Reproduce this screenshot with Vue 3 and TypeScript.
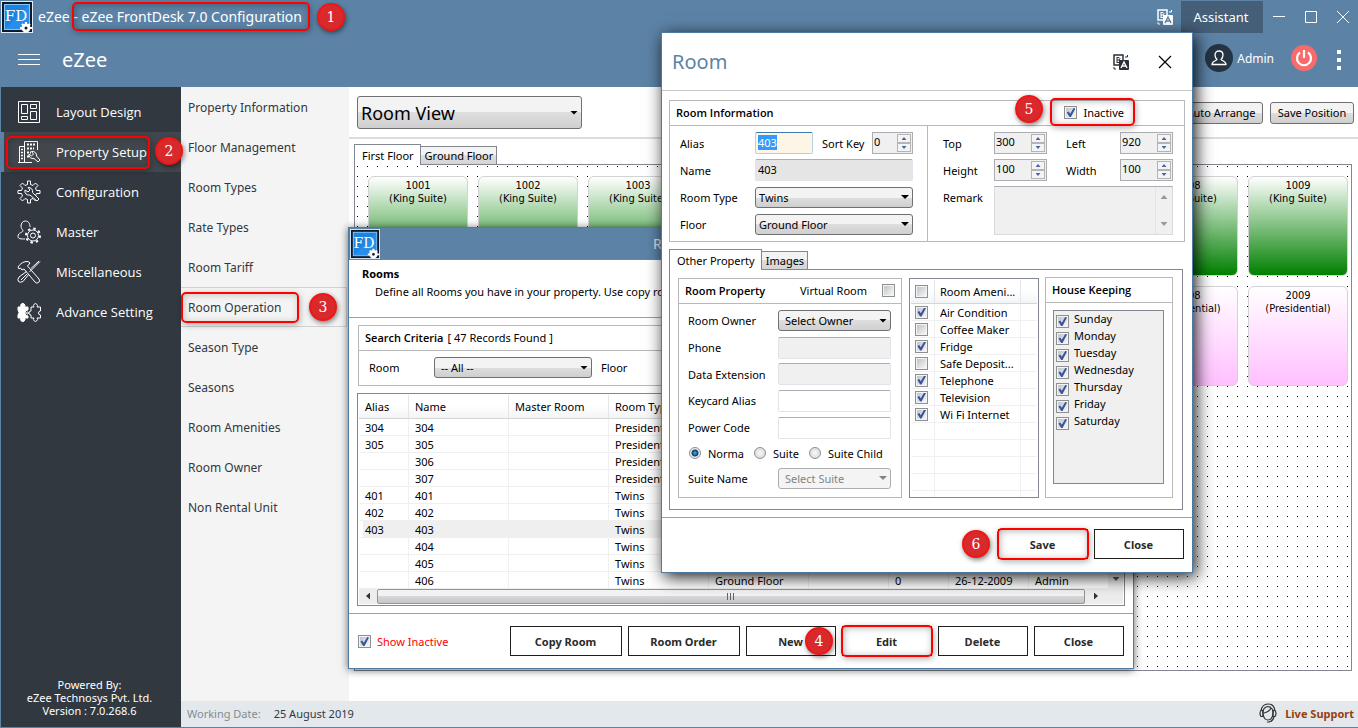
<script setup lang="ts">
import { onMounted, ref } from 'vue'

interface RoomRow {
  alias: string
  name: string
  type: string
  extra?: string[]
}

interface Tile {
  no: number
  type: string
  tone: string
  col: number
  row: number
}

const navItems = [
  { id: 'layout', label: 'Layout Design' },
  { id: 'property', label: 'Property Setup' },
  { id: 'config', label: 'Configuration' },
  { id: 'master', label: 'Master' },
  { id: 'misc', label: 'Miscellaneous' },
  { id: 'advance', label: 'Advance Setting' },
]
const activeNav = ref('property')

const subItems = [
  'Property Information', 'Floor Management', 'Room Types', 'Rate Types', 'Room Tariff', 'Room Operation',
  'Season Type', 'Seasons', 'Room Amenities', 'Room Owner', 'Non Rental Unit',
]
const activeSub = ref('Room Operation')

const tiles: Tile[] = [
  ...[1, 2, 3, 8, 9].map((n) => ({ no: 1000 + n, type: 'King Suite', tone: 'green', col: n, row: 1 })),
  ...[8, 9].map((n) => ({ no: 2000 + n, type: 'Presidential', tone: 'pink', col: n, row: 2 })),
]

const rooms: RoomRow[] = [
  { alias: '304', name: '304', type: 'Presidential' },
  { alias: '305', name: '305', type: 'Presidential' },
  { alias: '', name: '306', type: 'Presidential' },
  { alias: '', name: '307', type: 'Presidential' },
  { alias: '401', name: '401', type: 'Twins' },
  { alias: '402', name: '402', type: 'Twins' },
  { alias: '403', name: '403', type: 'Twins' },
  { alias: '', name: '404', type: 'Twins' },
  { alias: '', name: '405', type: 'Twins' },
  { alias: '', name: '406', type: 'Twins', extra: ['Ground Floor', '', '0', '26-12-2009', 'Admin'] },
]
const selectedRoom = ref('403')

const amenities = ref([
  { label: 'Air Condition', on: true },
  { label: 'Coffee Maker', on: false },
  { label: 'Fridge', on: true },
  { label: 'Safe Deposit...', on: false },
  { label: 'Telephone', on: true },
  { label: 'Television', on: true },
  { label: 'Wi Fi Internet', on: true },
])
const days = ref(
  ['Sunday', 'Monday', 'Tuesday', 'Wednesday', 'Thursday', 'Friday', 'Saturday'].map((label) => ({ label, on: true })),
)

const alias = ref('403')
const inactive = ref(true)
const showInactive = ref(true)
const virtualRoom = ref(false)
const kind = ref('Norma')
const kinds = ['Norma', 'Suite', 'Suite Child']

const aliasInput = ref<HTMLInputElement | null>(null)
onMounted(() => {
  aliasInput.value?.focus()
  aliasInput.value?.select()
})
</script>

<template>
  <div class="app">
    <header class="head">
      <div class="titlebar">
        <svg class="logo" viewBox="0 0 32 32" width="32" height="32">
          <rect width="32" height="32" fill="#dfeefa" />
          <rect x="1" y="1" width="30" height="30" fill="#0d1a2b" />
          <rect x="3" y="3" width="26" height="26" fill="#8cc4f2" />
          <rect x="4" y="4" width="24" height="24" fill="#1c84e0" />
          <path d="M4 28L28 4V28Z" fill="#2f96ee" opacity=".6" />
          <text x="15" y="20" text-anchor="middle" font-size="15" fill="#fff" font-family="DejaVu Serif, serif">FD</text>
          <circle cx="25" cy="27" r="3" fill="#0d1a2b" stroke="#fff" stroke-width="3" />
          <path d="M25 21v3M19 27h3M28 27h3M21 23l2 2M29 23l-2 2" stroke="#fff" stroke-width="2" />
        </svg>
        <h1 class="apptitle">eZee <span class="ringed r1">- eZee FrontDesk 7.0 Configuration</span></h1>
        <span class="badge b1">1</span>
        <div class="winctl">
          <button class="iconbtn lang" aria-label="Language">
            <svg viewBox="0 0 16 16" width="16" height="16">
              <rect x="1" y="1" width="9" height="10" fill="none" stroke="#fff" stroke-width="1.500" />
              <path d="M4 3v6M4 3.500h2q2 1 0 2.500q2 1 0 2.500H4M4 6h2" fill="none" stroke="#fff" />
              <rect x="6" y="6" width="10" height="10" rx="1" fill="#fff" />
              <path d="M8 14l3-6l3 6M9 12h4" fill="none" stroke="#5c83a6" stroke-width="1.400" />
              <path d="M12 3h2.500V1M1 13v2h2" fill="none" stroke="#fff" />
            </svg>
          </button>
          <button class="assistant">Assistant</button>
          <button class="iconbtn min" aria-label="Minimize">
            <svg viewBox="0 0 14 14" width="14" height="14"><path d="M1 6.500h12" stroke="#fff" /></svg>
          </button>
          <button class="iconbtn max" aria-label="Maximize">
            <svg viewBox="0 0 14 14" width="14" height="14"><path d="M1.500 1.500h11v11h-11z" fill="none" stroke="#fff" /></svg>
          </button>
          <button class="iconbtn cls" aria-label="Close application">
            <svg viewBox="0 0 14 14" width="14" height="14"><path d="M1 1l12 12M13 1L1 13" stroke="#fff" /></svg>
          </button>
        </div>
      </div>
      <div class="brandbar">
        <button class="iconbtn burger" aria-label="Menu">
          <svg viewBox="0 0 22 12" width="22" height="12"><path d="M0 .500h22M0 5.500h22M0 10.500h22" stroke="#fff" /></svg>
        </button>
        <span class="brand">eZee</span>
        <div class="user">
          <svg viewBox="0 0 28 28" width="28" height="28">
            <circle cx="14" cy="14" r="14" fill="#243442" />
            <path d="M14 7c2.500 0 4 1.800 4 4s-1 3.500-2 4.500c0 1 5 1.500 5 5H7c0-3.500 5-4 5-5c-1-1-2-2.300-2-4.500S11.500 7 14 7z" fill="none" stroke="#fff" stroke-width="1.300" />
          </svg>
          <span class="uname">Admin</span>
          <button class="iconbtn power" aria-label="Log out">
            <svg viewBox="0 0 26 26" width="26" height="26">
              <circle cx="13" cy="13" r="13" fill="#f96b6b" />
              <path d="M9 7.500a7 7 0 1 0 8 0M13 5v8" fill="none" stroke="#fff" stroke-width="2.200" />
            </svg>
          </button>
          <button class="iconbtn kebab" aria-label="More">
            <svg viewBox="0 0 4 20" width="4" height="20"><path d="M0 0h4v4H0zM0 8h4v4H0zM0 16h4v4H0z" fill="#fff" /></svg>
          </button>
        </div>
      </div>
    </header>

    <nav class="side">
      <button
        v-for="item in navItems" :key="item.id" class="navitem"
        :class="{ active: item.id === activeNav }" @click="activeNav = item.id"
      >
        <svg viewBox="0 0 24 24" width="24" height="24" fill="none" stroke="#fff" stroke-width="1">
          <g v-if="item.id === 'layout'">
            <path d="M1.500 1.500h21v21h-21zM4.500 4.500h6v9h-6zM13.500 4.500h6v4h-6zM4.500 16.500h6v3h-6zM13.500 11.500h6v8h-6z" />
          </g>
          <g v-else-if="item.id === 'property'">
            <path d="M2.500 22.500V6.500h5v16zM7.500 6V1.500h13V10M1 22.500h14M7.500 22V6" />
            <path d="M10 4.500h8M10 8.500h7M10 12.500h4M10 16.500h2" stroke-width="2" stroke-dasharray="2 1" />
            <path d="M4 9.500h2M4 12.500h2M4 15.500h2M4 18.500h2" stroke-width="1.500" />
            <path d="M14.500 11.500a4 4 0 0 1 5 4.500l3.500 4l-2 2l-4-3.500a4 4 0 0 1-5-4.500l2.500 2l2-2z" fill="#41474d" />
          </g>
          <g v-else-if="item.id === 'config'">
            <path d="M10.500 1h3v3.500l2.500 1l2.500-2.500l2.500 2.500L18.500 8l1 2.500H23v3h-3.500l-1 2.500l2.500 2.500l-2.500 2.500l-2.500-2.500l-2.500 1V23h-3v-3.500l-2.500-1L5.500 21L3 18.500L5.500 16l-1-2.500H1v-3h3.500l1-2.500L3 5.500L5.500 3L8 5.500l2.500-1z" />
            <path d="M11 7.500a4 4 0 0 1 4.500 5L22 19l-2 2l-7-6a4 4 0 0 1-5-5l3 2l2-2z" fill="#31383f" />
          </g>
          <g v-else-if="item.id === 'master'">
            <path d="M13 7C13 3 11 1 8.500 1S4 3 4 6c0 2 1 3 2 4.500C6 13 1 12 1 16.500C1 19 4 19 8 19" />
            <circle cx="16" cy="15.500" r="5.500" />
            <circle cx="16" cy="15.500" r="2.500" />
            <circle cx="16" cy="15.500" r="7" stroke-width="2" stroke-dasharray="2.500 3" />
          </g>
          <g v-else-if="item.id === 'misc'">
            <path d="M1 7q4-6 10-5.500l2 1.500l-2.500 3L22 19q1.500 2-.5 3.500t-3.500-.5L7 9L5 10L3.500 8L2 9z" />
            <path d="M23 1.500L12.500 12M12 14l-6 7.500q-3 1.500-4.500 0t.5-4.500L9.500 11.500M22 1L14 8.500" />
            <path d="M4 20l6-6" />
          </g>
          <g v-else>
            <path d="M1 7h3a2.200 2.200 0 1 1 3.500 0H11v3a3 3 0 1 0 0 6v2H7.500a2.200 2.200 0 1 1-3.500 0H1v-3q2-2.500 0-5z" fill="#fff" />
            <circle cx="10.500" cy="13" r="1" />
            <path d="M14 7h3a2 2 0 1 1 3 0h3.500v4a2 2 0 1 0 0 4v3H20a2 2 0 1 1-3 0h-3v-3a2 2 0 1 1 0-4z" />
          </g>
        </svg>
        <span>{{ item.label }}</span>
      </button>
      <span class="badge b2">2</span>
      <p class="powered">Powered By:<br>eZee Technosys Pvt. Ltd.<br>Version : 7.0.268.6</p>
    </nav>

    <nav class="sub">
      <a
        v-for="item in subItems" :key="item" href="#" class="subitem"
        :class="{ active: item === activeSub }" @click.prevent="activeSub = item"
      >{{ item }}</a>
      <span class="badge b3">3</span>
    </nav>

    <main class="work">
      <div class="toolbar">
        <div class="combo big">
          <select aria-label="View"><option>Room View</option></select>
        </div>
        <div class="tools">
          <button class="grey">Auto Arrange</button>
          <button class="grey">Save Position</button>
        </div>
      </div>
      <div class="floors">
        <div class="tabs">
          <button class="tab on">First Floor</button>
          <button class="tab">Ground Floor</button>
        </div>
        <div class="canvas">
          <div
            v-for="t in tiles" :key="t.no" class="tile" :class="t.tone"
            :style="{ gridColumn: t.col, gridRow: t.row }"
          >{{ t.no }}<br>({{ t.type }})</div>
        </div>
      </div>
    </main>

    <footer class="status">
      <span class="muted">Working Date:</span>
      <span>25 August 2019</span>
      <a href="#" class="live">
        <svg viewBox="0 0 18 20" width="18" height="20" fill="none" stroke="#333" stroke-width="1.200">
          <path d="M2 8q1-7 7-7t7 7M15 14q-1 4-5 5H8" />
          <path d="M4 8q1-4 5-4.500Q13 4 14 8v3q-1 6-5 6t-5-6z" />
          <path d="M5 10q5-1 7-5M2 7.500h2v6H2q-2-3 0-6zM16 7.500h-2v6h2q2-3 0-6z" />
        </svg>
        Live Support
      </a>
    </footer>

    <section class="win rooms" aria-label="Rooms">
      <div class="wintitle">
        <svg class="logo" viewBox="0 0 32 32" width="30" height="30">
          <rect width="32" height="32" fill="#dfeefa" />
          <rect x="1" y="1" width="30" height="30" fill="#0d1a2b" />
          <rect x="3" y="3" width="26" height="26" fill="#8cc4f2" />
          <rect x="4" y="4" width="24" height="24" fill="#1c84e0" />
          <path d="M4 28L28 4V28Z" fill="#2f96ee" opacity=".6" />
          <text x="15" y="20" text-anchor="middle" font-size="15" fill="#fff" font-family="DejaVu Serif, serif">FD</text>
          <circle cx="25" cy="27" r="3" fill="#0d1a2b" stroke="#fff" stroke-width="3" />
          <path d="M25 21v3M19 27h3M28 27h3M21 23l2 2M29 23l-2 2" stroke="#fff" stroke-width="2" />
        </svg>
        <span class="wincaption">Room Operation</span>
      </div>
      <div class="intro">
        <h2>Rooms</h2>
        <p>Define all Rooms you have in your property. Use copy room</p>
      </div>
      <div class="roomsbody">
        <fieldset class="group search">
          <div class="ghead"><b>Search Criteria</b><span>[ 47 Records Found ]</span></div>
          <div class="searchrow">
            <label for="s-room">Room</label>
            <div class="combo indent"><select id="s-room"><option>-- All --</option></select></div>
            <span>Floor</span>
          </div>
        </fieldset>
        <div class="listview">
          <div class="listtop">
            <table class="roomtable">
              <colgroup>
                <col class="w50"><col class="w100"><col class="w100"><col class="w100"><col class="w100">
                <col class="w80"><col class="w60"><col class="w80"><col class="w80">
              </colgroup>
              <thead>
                <tr>
                  <th>Alias</th><th>Name</th><th>Master Room</th><th>Room Type</th><th v-for="n in 5" :key="n"></th>
                </tr>
              </thead>
              <tbody>
                <tr
                  v-for="r in rooms" :key="r.name" :class="{ sel: r.name === selectedRoom }"
                  @click="selectedRoom = r.name"
                >
                  <td>{{ r.alias }}</td><td>{{ r.name }}</td><td></td><td>{{ r.type }}</td>
                  <td v-for="n in 5" :key="n">{{ r.extra?.[n - 1] }}</td>
                </tr>
              </tbody>
            </table>
            <div class="vscroll"><i class="arrow down"></i></div>
          </div>
          <div class="hscroll">
            <i class="arrow left"></i>
            <div class="thumb"><i class="grip"></i></div>
            <i class="arrow right"></i>
            <span class="corner"></span>
          </div>
        </div>
      </div>
      <div class="foot">
        <label class="showin"><input v-model="showInactive" type="checkbox">Show Inactive</label>
        <button class="flat wide">Copy Room</button>
        <button class="flat wide">Room Order</button>
        <button class="flat">New</button>
        <button class="flat ringed r4">Edit</button>
        <button class="flat">Delete</button>
        <button class="flat">Close</button>
        <span class="badge b4">4</span>
      </div>
    </section>

    <section class="win room" role="dialog" aria-label="Room">
      <div class="roomhead">
        <h2>Room</h2>
        <button class="iconbtn" aria-label="Language">
          <svg viewBox="0 0 16 16" width="16" height="16">
            <rect x="1" y="1" width="9" height="10" fill="none" stroke="#2b3036" stroke-width="1.500" />
            <path d="M4 3v6M4 3.500h2q2 1 0 2.500q2 1 0 2.500H4M4 6h2" fill="none" stroke="#2b3036" />
            <rect x="6" y="6" width="10" height="10" rx="1" fill="#2b3036" />
            <path d="M8 14l3-6l3 6M9 12h4" fill="none" stroke="#fff" stroke-width="1.400" />
            <path d="M12 3h2.500V1M1 13v2h2" fill="none" stroke="#2b3036" />
          </svg>
        </button>
        <button class="iconbtn" aria-label="Close room">
          <svg viewBox="0 0 14 14" width="14" height="14"><path d="M1 1l12 12M13 1L1 13" stroke="#000" stroke-width="1.200" /></svg>
        </button>
      </div>
      <div class="roombody">
        <div class="group info">
          <div class="ghead">
            <b>Room Information</b>
            <label class="inact ringed r5"><input v-model="inactive" type="checkbox">Inactive</label>
            <span class="badge b5">5</span>
          </div>
          <div class="infocols">
            <div class="infoleft">
              <label for="alias">Alias</label>
              <div class="pair">
                <input id="alias" ref="aliasInput" v-model="alias" class="box focus" type="text">
                <label for="sort">Sort Key</label>
                <div class="spin"><input id="sort" type="text" value="0"><span><button aria-label="Up"></button><button aria-label="Down"></button></span></div>
              </div>
              <label for="name">Name</label>
              <input id="name" class="box dim" type="text" value="403" readonly>
              <label for="rtype">Room Type</label>
              <div class="combo"><select id="rtype"><option>Twins</option></select></div>
              <label for="floor">Floor</label>
              <div class="combo"><select id="floor"><option>Ground Floor</option></select></div>
            </div>
            <div class="inforight">
              <label for="top">Top</label>
              <div class="spin"><input id="top" type="text" value="300"><span><button aria-label="Up"></button><button aria-label="Down"></button></span></div>
              <label for="left">Left</label>
              <div class="spin"><input id="left" type="text" value="920"><span><button aria-label="Up"></button><button aria-label="Down"></button></span></div>
              <label for="height">Height</label>
              <div class="spin"><input id="height" type="text" value="100"><span><button aria-label="Up"></button><button aria-label="Down"></button></span></div>
              <label for="width">Width</label>
              <div class="spin"><input id="width" type="text" value="100"><span><button aria-label="Up"></button><button aria-label="Down"></button></span></div>
              <label for="remark">Remark</label>
              <div class="remark">
                <textarea id="remark"></textarea>
                <span class="rscroll"><i class="arrow up"></i><i class="arrow down"></i></span>
              </div>
            </div>
          </div>
        </div>
        <div class="tabs">
          <button class="tab on">Other Property</button>
          <button class="tab">Images</button>
        </div>
        <div class="panel">
          <div class="group prop">
            <div class="ghead"><b>Room Property</b><label class="virt">Virtual Room<input v-model="virtualRoom" type="checkbox"></label></div>
            <div class="propform">
              <label for="owner">Room Owner</label>
              <div class="combo indent"><select id="owner"><option>Select Owner</option></select></div>
              <label for="phone">Phone</label><input id="phone" class="box grey2" type="text">
              <label for="ext">Data Extension</label><input id="ext" class="box grey2" type="text">
              <label for="key">Keycard Alias</label><input id="key" class="box" type="text">
              <label for="pcode">Power Code</label><input id="pcode" class="box" type="text">
              <div class="radios">
                <label v-for="k in kinds" :key="k"><input v-model="kind" type="radio" name="kind" :value="k">{{ k }}</label>
              </div>
              <label for="suite">Suite Name</label>
              <div class="combo indent off"><select id="suite" disabled><option>Select Suite</option></select></div>
            </div>
          </div>
          <div class="amen">
            <table>
              <colgroup><col class="c1"><col class="c2"><col class="c3"></colgroup>
              <thead>
                <tr><th><input type="checkbox" aria-label="All amenities"></th><th>Room Ameni...</th><th></th></tr>
              </thead>
              <tbody>
                <tr v-for="(a, i) in amenities" :key="a.label">
                  <td><input :id="'am' + i" v-model="a.on" type="checkbox"></td>
                  <td><label :for="'am' + i">{{ a.label }}</label></td><td></td>
                </tr>
                <tr v-for="n in 5" :key="'e' + n"><td></td><td></td><td></td></tr>
              </tbody>
            </table>
          </div>
          <div class="group house">
            <div class="ghead"><b>House Keeping</b></div>
            <div class="days">
              <label v-for="d in days" :key="d.label"><input v-model="d.on" type="checkbox"><span>{{ d.label }}</span></label>
            </div>
          </div>
        </div>
      </div>
      <div class="foot">
        <button class="flat ringed r6">Save</button>
        <button class="flat">Close</button>
        <span class="badge b6">6</span>
      </div>
    </section>
  </div>
</template>

<style>
body {
  margin: 0;
}
</style>

<style scoped>
* {
  box-sizing: border-box;
}
.app {
  position: relative;
  display: grid;
  grid-template-columns: 180px 168px minmax(0, 1fr);
  grid-template-rows: 87px minmax(0, 1fr) 26px;
  height: 100vh;
  padding: 0 0 1px 1px;
  overflow: hidden;
  background: #5c83a6;
  color: #000;
  font: 11px/13px "Noto Sans", "Open Sans", sans-serif;
}
button, input, select, textarea {
  margin: 0;
  font: inherit;
  color: inherit;
  border-radius: 0;
  outline: none;
}
h1, h2, p {
  margin: 0;
  font: inherit;
}
svg {
  display: block;
  flex: none;
}
.iconbtn {
  flex: none;
  padding: 0;
  border: 0;
  background: none;
}

/* header */
.head {
  grid-column: 1 / -1;
  color: #fff;
}
.titlebar {
  position: relative;
  display: flex;
  align-items: center;
  height: 33px;
  padding-top: 1px;
}
.apptitle {
  margin-left: 5px;
  font-size: 14px;
  line-height: 20px;
}
.winctl {
  display: flex;
  align-items: center;
  align-self: stretch;
  margin-left: auto;
  padding-right: 8px;
}
.assistant {
  align-self: stretch;
  width: 82px;
  margin: 0 9px 0 8px;
  padding: 0 2px 0 0;
  border: 0;
  background: #455f78;
  font-size: 13px;
}
.max {
  margin: 0 18px;
}
.brandbar {
  display: flex;
  align-items: center;
  height: 54px;
  padding: 0 17px;
}
.brand {
  margin-left: 22px;
  padding-bottom: 1px;
  font-size: 20px;
}
.user {
  display: flex;
  align-items: center;
  margin-left: auto;
  padding-bottom: 4px;
}
.uname {
  margin: 0 17px 0 4px;
  font-size: 12px;
}
.kebab {
  margin: 4px 0 0 20px;
}

/* navigation */
.side {
  position: relative;
  display: flex;
  flex-direction: column;
  grid-row: 2 / -1;
  padding-top: 5px;
  background: #31383f;
  color: #fff;
}
.navitem {
  display: flex;
  align-items: center;
  gap: 15px;
  height: 40px;
  padding: 0 0 0 16px;
  border: 0;
  background: none;
  font-family: "Open Sans", "Noto Sans", sans-serif;
  font-size: 13px;
  white-space: nowrap;
}
.navitem.active {
  position: relative;
  background: linear-gradient(90deg, #5c83a6 3px, #41474d 3px);
}
.powered {
  margin-top: auto;
  padding: 0 3px 10px 0;
  text-align: center;
}
.sub {
  position: relative;
  background: #f4f4f4;
}
.subitem {
  display: flex;
  align-items: center;
  height: 40px;
  padding: 0 0 0 7px;
  color: #31383f;
  font-size: 12px;
  text-decoration: none;
}
.subitem.active {
  position: relative;
  margin-right: 2px;
  border: 1px solid #d2d2d2;
  border-left: 0;
}

/* work area */
.work {
  display: flex;
  flex-direction: column;
  background: #fff;
}
.toolbar {
  display: flex;
  align-items: center;
  height: 52px;
  padding: 1px 4px 0 8px;
  border-bottom: 2px solid #dcdcdc;
}
.tools {
  display: flex;
  gap: 7px;
  margin-left: auto;
}
.grey {
  width: 84px;
  height: 22px;
  padding: 0;
  border: 1px solid #707070;
  border-radius: 3px;
  background: linear-gradient(#f3f3f3 50%, #dedede 50%, #cfcfcf);
  white-space: nowrap;
}
.floors {
  display: flex;
  flex: 1;
  flex-direction: column;
  padding: 5px 6px 30px 5px;
}
.tabs {
  display: flex;
  align-items: flex-end;
}
.tab {
  position: relative;
  height: 18px;
  padding: 0 3px 0 4px;
  border: 1px solid #828790;
  border-bottom: 0;
  border-left: 0;
  background: linear-gradient(#f3f3f3 50%, #dedede 50%, #d5d5d5);
  white-space: nowrap;
}
.tab.on {
  z-index: 1;
  height: 21px;
  margin-bottom: -1px;
  padding: 0 6px 0 7px;
  border-left: 1px solid #828790;
  background: #fff;
}
.canvas {
  display: grid;
  flex: 1;
  grid-template-columns: repeat(auto-fill, 100px);
  grid-auto-rows: 100px;
  gap: 10px;
  padding: 11px 0 0 13px;
  border: 1px solid #828790;
  background: linear-gradient(90deg, #fff 9px, transparent 9px) 3px 2px / 10px 10px, linear-gradient(#fff 9px, #000 9px) 3px 2px / 10px 10px;
}
.tile {
  padding-top: 2px;
  border: 1px solid #d3d3d3;
  border-radius: 6px;
  font-family: "DejaVu Sans Condensed", "Noto Sans", sans-serif;
  text-align: center;
}
.green {
  background: linear-gradient(#fff, #008000);
}
.pink {
  background: linear-gradient(#fff, #ffc0ff);
}
.status {
  display: flex;
  grid-column: 2 / -1;
  align-items: center;
  gap: 13px;
  padding: 0 4px 2px 6px;
  background: #e3e8ec;
  color: #31383f;
}
.muted {
  color: #848b93;
}
.live {
  display: flex;
  align-items: center;
  gap: 8px;
  margin-left: auto;
  color: #96400f;
  font-weight: 700;
  text-decoration: none;
}

/* shared controls */
.combo {
  position: relative;
}
.combo select {
  display: block;
  width: 100%;
  height: 21px;
  padding: 0 16px 0 3px;
  appearance: none;
  border: 1px solid #707070;
  border-radius: 3px;
  background: linear-gradient(#f3f3f3 50%, #dedede 50%, #cfcfcf);
}
.combo::after {
  position: absolute;
  top: 50%;
  right: 4px;
  width: 8px;
  height: 4px;
  margin-top: -2px;
  clip-path: polygon(0 0, 100% 0, 50% 100%);
  background: #000;
  content: "";
  pointer-events: none;
}
.combo.big {
  width: 225px;
}
.combo.big select {
  height: 33px;
  font-size: 18px;
  line-height: 28px;
}
.combo.indent select {
  padding-left: 6px;
}
.combo.off select {
  border-color: #adadad;
  background: #f4f4f4;
  color: #838383;
  opacity: 1;
}
.combo.off::after {
  background: #838383;
}
input[type="checkbox"] {
  position: relative;
  display: block;
  flex: none;
  width: 13px;
  height: 13px;
  padding: 1px;
  appearance: none;
  border: 1px solid #8e8f8f;
  background: linear-gradient(135deg, #bfc4c9, #f6f6f6) content-box, #f4f4f4;
}
input[type="checkbox"]:checked::before {
  position: absolute;
  inset: 1px;
  clip-path: polygon(5% 50%, 25% 40%, 42% 65%, 80% 0, 100% 5%, 50% 100%, 35% 100%);
  background: #37549c;
  content: "";
}
input[type="radio"] {
  flex: none;
  width: 12px;
  height: 12px;
  appearance: none;
  border: 1px solid #8e8f8f;
  border-radius: 50%;
  background: radial-gradient(#f8f8f8, #d0d3d5);
}
input[type="radio"]:checked {
  background: radial-gradient(circle at 50% 50%, #3fb4e8, #0d3d66 3px, #e8ecee 4px);
}
.box {
  width: 100%;
  min-width: 0;
  height: 22px;
  padding: 0 2px 2px;
  border: 1px solid #e2e3ea;
  border-top-color: #abadb3;
  border-radius: 2px;
  background: #fff;
}
.box.grey2 {
  background: #f0f0f0;
}
.box.dim {
  background: #e5e5e5;
}
.box.focus {
  width: 58px;
  border-color: #b5cfe7;
  border-top-color: #3d7bad;
  background: #fdf5e6;
}
.box.focus::selection {
  background: #3399ff;
  color: #fff;
}
.spin {
  display: flex;
  height: 22px;
  border: 1px solid #abadb3;
  background: #f0f0f0;
}
.spin input {
  flex: 1;
  width: 0;
  min-width: 0;
  padding: 0 1px 4px;
  border: 0;
  background: none;
}
.spin span {
  display: flex;
  flex-direction: column;
  width: 15px;
  padding: 1px 1px 1px 0;
}
.spin button {
  display: grid;
  flex: 1;
  min-height: 0;
  padding: 0;
  place-items: center;
  border: 1px solid #b4b4b4;
  background: #f4f4f4;
}
.spin button::before {
  width: 5px;
  height: 3px;
  clip-path: polygon(50% 0, 100% 100%, 0 100%);
  background: #4a62a8;
  content: "";
}
.spin button:last-child::before {
  clip-path: polygon(0 0, 100% 0, 50% 100%);
}
.group {
  min-width: 0;
  margin: 0;
  padding: 0;
  border: 1px solid #b9b9b9;
}
.ghead {
  position: relative;
  display: flex;
  align-items: center;
  height: 25px;
  padding: 0 0 1px 6px;
  border-bottom: 1px solid #b9b9b9;
}
.ghead b {
  font-family: "Open Sans", "Noto Sans", sans-serif;
  font-weight: 600;
}
.flat {
  position: relative;
  width: 90px;
  height: 30px;
  padding: 0 1px 0 0;
  border: 1px solid #1f1f1f;
  background: #fff;
  color: #2b2b2b;
  font-weight: 700;
}
.flat.wide {
  width: 112px;
}
.arrow {
  display: block;
  width: 7px;
  height: 4px;
  background: #555;
}
.arrow.up {
  clip-path: polygon(50% 0, 100% 100%, 0 100%);
}
.arrow.down {
  clip-path: polygon(0 0, 100% 0, 50% 100%);
}
.arrow.left, .arrow.right {
  width: 4px;
  height: 7px;
  background: #333;
}
.arrow.left {
  clip-path: polygon(100% 0, 100% 100%, 0 50%);
}
.arrow.right {
  clip-path: polygon(0 0, 0 100%, 100% 50%);
}

/* windows */
.win {
  position: absolute;
  display: flex;
  flex-direction: column;
  border: 1px solid #4f7ba3;
  background: #fff;
}
.foot {
  position: relative;
  display: flex;
  align-items: flex-start;
  justify-content: flex-end;
  gap: 6px;
  border-top: 1px solid #a0a0a0;
}
.rooms {
  top: 227px;
  left: 348px;
  width: 786px;
  height: 442px;
  box-shadow: 0 1px 8px rgba(0, 0, 0, 0.6);
}
.wintitle {
  display: flex;
  align-items: center;
  height: 31px;
  padding-left: 1px;
  background: #5c83a6;
}
.wincaption {
  margin-left: 273px;
  color: #dbe4ec;
  font-size: 14px;
}
.intro {
  height: 59px;
  padding: 7px 13px;
  border-top: 1px solid #808080;
  border-bottom: 1px solid #a0a0a0;
}
.intro h2 {
  font-weight: 700;
}
.intro p {
  padding: 5px 0 0 13px;
  white-space: nowrap;
}
.roomsbody {
  display: flex;
  flex: 1;
  flex-direction: column;
  gap: 7px;
  min-height: 0;
  padding: 7px 8px;
}
.search {
  height: 61px;
  margin-left: 1px;
}
.search .ghead span {
  margin-left: 4px;
}
.searchrow {
  display: grid;
  grid-template-columns: 65px 158px auto;
  align-items: center;
  padding: 6px 0 0 10px;
}
.searchrow > span {
  padding-left: 9px;
}
.listview {
  display: flex;
  flex: 1;
  flex-direction: column;
  min-height: 0;
  padding: 1px;
  border: 1px solid #828790;
}
.listtop {
  display: flex;
  flex: 1;
  min-height: 0;
  overflow: hidden;
}
.roomtable {
  flex: none;
  width: 750px;
  table-layout: fixed;
  border-collapse: separate;
  border-spacing: 0;
}
.w50 { width: 50px; }
.w60 { width: 60px; }
.w80 { width: 80px; }
.w100 { width: 100px; }
.roomtable th {
  height: 24px;
  padding: 0 6px;
  border-right: 1px solid #e3e6e9;
  border-bottom: 1px solid #d5d5d5;
  background: linear-gradient(#fff 45%, #f3f4f6);
  font-weight: 400;
  text-align: left;
}
.roomtable td {
  height: 17px;
  padding: 0 0 0 6px;
  border-right: 1px solid #f0f0f0;
  border-bottom: 1px solid #f0f0f0;
  white-space: nowrap;
}
.sel td {
  background: #efefef;
}
.sel td:first-child {
  background: linear-gradient(90deg, #fff 4px, #efefef 4px);
}
.vscroll {
  display: flex;
  align-items: flex-end;
  justify-content: center;
  flex: 1;
  padding-bottom: 7px;
  background: #f0f0f0;
}
.hscroll {
  display: grid;
  grid-template-columns: 18px minmax(0, 1fr) 22px 16px;
  align-items: center;
  justify-items: center;
  height: 16px;
  background: #ededed;
}
.thumb {
  display: grid;
  place-items: center;
  width: 100%;
  height: 15px;
  border: 1px solid #959595;
  border-radius: 2px;
  background: linear-gradient(#f2f2f2 50%, #d6d7d9 50%, #c4c5c8);
}
.grip {
  width: 8px;
  height: 7px;
  background: repeating-linear-gradient(90deg, #666 0 1px, transparent 1px 3px);
}
.rooms .foot {
  height: 55px;
  padding: 12px 9px 0;
}
.showin {
  display: flex;
  align-items: center;
  gap: 6px;
  margin-right: auto;
  padding-top: 9px;
  color: #f00;
}

/* room dialog */
.room {
  top: 32px;
  left: 661px;
  width: 532px;
  height: 541px;
  box-shadow: 3px 4px 16px rgba(0, 0, 0, 0.9);
}
.roomhead {
  display: flex;
  align-items: center;
  gap: 29px;
  height: 58px;
  padding: 0 20px 0 10px;
  border-bottom: 1px solid #c6c6c6;
}
.roomhead h2 {
  margin-right: auto;
  color: #5c83a6;
  font-size: 20px;
}
.roombody {
  flex: 1;
  min-height: 0;
  padding: 9px 7px 0;
}
.info {
  height: 142px;
  margin-bottom: 7px;
}
.inact {
  position: relative;
  display: flex;
  align-items: center;
  gap: 6px;
  margin-left: auto;
  padding-right: 60px;
}
.infocols {
  display: grid;
  grid-template-columns: 258px minmax(0, 1fr);
}
.infoleft {
  display: grid;
  grid-template-columns: 75px 158px;
  grid-auto-rows: 22px;
  row-gap: 5px;
  align-items: center;
  height: 115px;
  padding: 6px 0 0 10px;
  border-right: 1px solid #b9b9b9;
}
.pair {
  display: grid;
  grid-template-columns: 67px 50px 41px;
  align-items: center;
}
.inforight {
  display: grid;
  grid-template-columns: 51px 53px 19px 54px 53px;
  grid-auto-rows: 22px;
  row-gap: 5px;
  align-items: center;
  padding: 6px 0 0 15px;
}
.inforight > label:nth-of-type(even) {
  grid-column: 4;
}
.remark {
  display: flex;
  grid-column: 2 / -1;
  align-self: start;
  height: 49px;
  border: 1px solid #d9dade;
  border-top-color: #abadb3;
  background: #f0f0f0;
}
.remark textarea {
  flex: 1;
  min-width: 0;
  padding: 2px;
  resize: none;
  overflow: hidden;
  border: 0;
  background: none;
}
.rscroll {
  display: flex;
  flex-direction: column;
  align-items: center;
  justify-content: space-between;
  width: 17px;
  padding: 8px 0;
  border-left: 1px solid #e4e4e4;
}
.rscroll .arrow {
  background: #999;
}
.panel {
  display: flex;
  align-items: stretch;
  height: 241px;
  margin-right: 2px;
  padding: 7px 9px 11px 8px;
  border: 1px solid #828790;
}
.prop {
  flex: none;
  width: 224px;
  margin: 1px 7px 0 0;
}
.virt {
  display: flex;
  align-items: center;
  gap: 15px;
  margin-left: auto;
  padding-right: 6px;
}
.propform {
  display: grid;
  grid-template-columns: 90px 113px;
  grid-template-rows: 27px 27px 26px 27px 27px 24px 26px;
  align-items: center;
  padding: 3px 0 0 9px;
}
.radios {
  display: flex;
  grid-column: 1 / -1;
  gap: 10px;
  padding-left: 1px;
}
.radios label {
  display: flex;
  align-items: center;
  gap: 7px;
}
.amen {
  flex: none;
  width: 130px;
  margin: 1px 6px 0 0;
  padding: 1px;
  overflow: hidden;
  border: 1px solid #828790;
}
.amen table {
  width: 100%;
  table-layout: fixed;
  border-collapse: separate;
  border-spacing: 0;
}
.c1 { width: 24px; }
.c2 { width: 86px; }
.amen th {
  height: 24px;
  padding: 0 0 0 4px;
  border-right: 1px solid #e3e6e9;
  border-bottom: 1px solid #d5d5d5;
  background: linear-gradient(#fff 45%, #f3f4f6);
  font-weight: 400;
  text-align: left;
  white-space: nowrap;
}
.amen td {
  height: 17px;
  padding: 0 0 0 4px;
  border-right: 1px solid #f0f0f0;
  border-bottom: 1px solid #f0f0f0;
  white-space: nowrap;
}
.amen td:nth-child(2), .amen th:nth-child(2) {
  padding-left: 5px;
}
.amen tr > :last-child {
  border-right: 0;
}
.house {
  flex: none;
  width: 128px;
}
.days {
  height: 174px;
  margin: 7px 8px 0 7px;
  padding: 1px 2px;
  border: 1px solid #828790;
  background: #f0f0f0;
}
.days label {
  display: flex;
  gap: 5px;
  align-items: flex-end;
  height: 17px;
  padding-bottom: 1px;
}
.days label span {
  align-self: flex-start;
}
.room .foot {
  height: 55px;
  padding: 11px 8px 0;
}

/* step markers */
.badge {
  position: absolute;
  z-index: 3;
  display: grid;
  place-items: center;
  width: 28px;
  height: 28px;
  border: 2px solid #f01616;
  border-radius: 50%;
  background: #d8292c;
  box-shadow: 1px 2px 5px rgba(0, 0, 0, 0.5);
  color: #fff;
  font: 14px/16px "DejaVu Serif", serif;
}
.ringed {
  position: relative;
}
.ringed::after {
  position: absolute;
  z-index: 2;
  inset: -2px;
  border: 2px solid #f00;
  border-radius: 5px;
  box-shadow: 1px 2px 6px rgba(0, 0, 0, 0.3), inset 1px 1px 7px rgba(0, 0, 0, 0.3);
  content: "";
  pointer-events: none;
}
.r1::after {
  inset: -5px -8px -5px -1px;
}
.r5::after {
  inset: -8px 49px -7px -14px;
}
.navitem.active::after, .subitem.active::after {
  position: absolute;
  border: 2px solid #f00;
  border-radius: 5px;
  box-shadow: 1px 2px 6px rgba(0, 0, 0, 0.3), inset 1px 1px 7px rgba(0, 0, 0, 0.2);
  content: "";
  pointer-events: none;
}
.navitem.active::after {
  inset: 4px 31px 3px 5px;
}
.subitem.active::after {
  inset: 4px 47px 3px 0;
}
.b1 { top: 3px; left: 316px; }
.b2 { top: 50px; left: 154px; }
.b3 { top: 206px; left: 128px; }
.b4 { top: 13px; left: 456px; }
.b5 { top: -6px; left: 345px; }
.b6 { top: 12px; left: 300px; }
</style>
